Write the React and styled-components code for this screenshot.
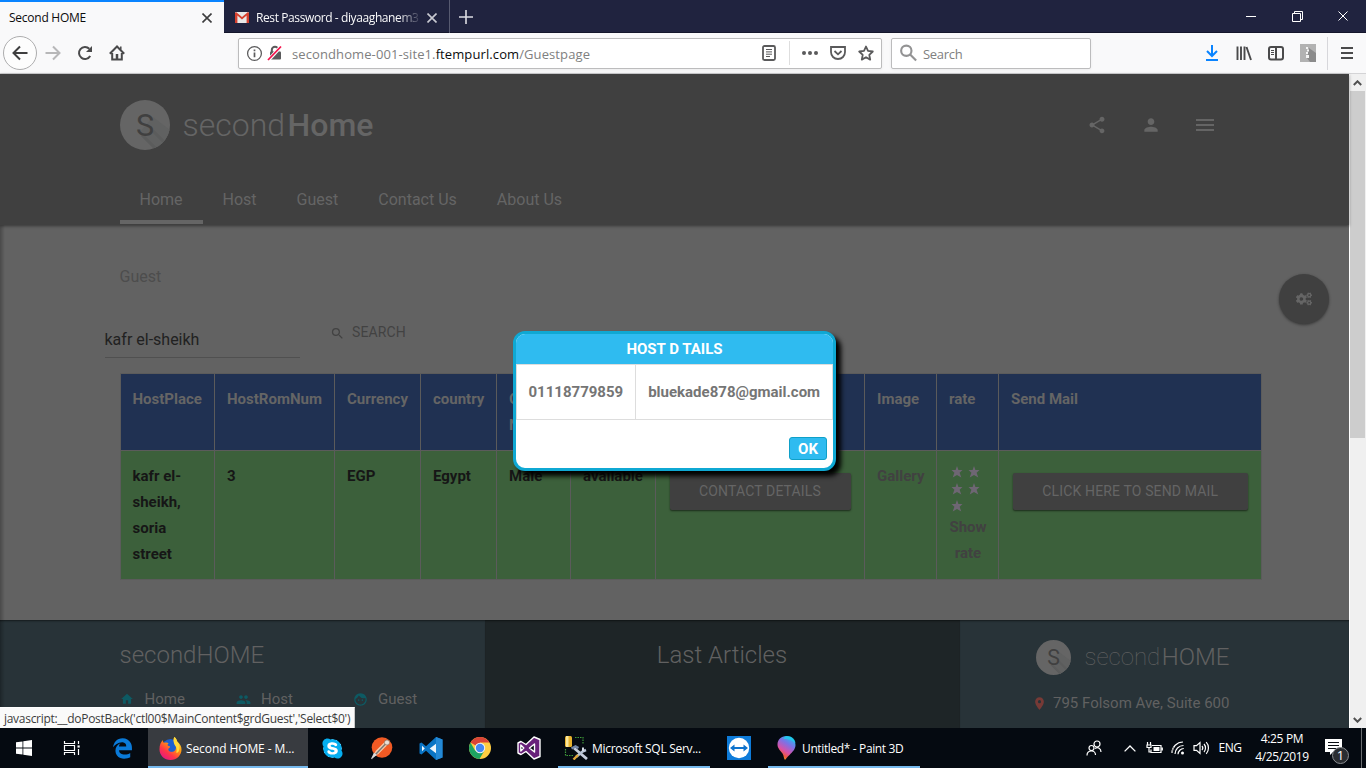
import React from "react";
import styled, { createGlobalStyle, css } from "styled-components";
import { MdShare, MdPerson, MdHome, MdPeople, MdFace, MdSearch, MdPlace } from "react-icons/md";
import { FaCogs, FaSkype, FaEdgeLegacy } from "react-icons/fa";

const ui = `"Open Sans", "Noto Sans", sans-serif`;

const GlobalStyle = createGlobalStyle`
  * { box-sizing: border-box; }
  body { margin: 0; overflow: hidden; background: #050a11; }
  svg { display: block; flex: none; }
`;

const Screen = styled.div`
  position: relative;
  width: 1366px;
  height: 768px;
  display: flex;
  flex-direction: column;
  font-family: Roboto, sans-serif;
`;

/* ---------- browser chrome ---------- */

const TabBar = styled.div`
  height: 33px;
  flex: none;
  display: flex;
  background: #20233f;
  box-shadow: inset 0 -1px 0 #14162b;
`;

const Tab = styled.div`
  display: flex;
  align-items: center;
  height: 33px;
  font: 12px ${ui};
  white-space: nowrap;
  ${(p) =>
    p.$active
      ? css`
          width: 224px;
          padding: 2px 12px 0 9px;
          background: #f9f9fa;
          color: #0c0c0d;
          box-shadow: inset 0 2px 0 #0a84ff;
        `
      : css`
          width: 226px;
          padding: 2px 12px 0 11px;
          color: #f9f9fa;
          border-right: 1px solid #575a70;
          gap: 7px;
        `}
`;

const TabTitle = styled.span`
  flex: 1;
  min-width: 0;
  letter-spacing: ${(p) => p.$ls || 0}px;
  ${(p) => p.$fade && "mask-image: linear-gradient(90deg, #000 87%, transparent 101%);"}
`;

const NewTab = styled.div`
  width: 32px;
  display: flex;
  align-items: center;
  justify-content: center;
`;

const WindowButtons = styled.div`
  margin-left: auto;
  display: flex;
`;

const WindowButton = styled.div`
  width: 46px;
  height: 32px;
  display: flex;
  align-items: center;
  justify-content: center;
`;

const Toolbar = styled.div`
  height: 41px;
  flex: none;
  display: flex;
  align-items: center;
  background: #f9f9fa;
  border-bottom: 1px solid #d4d4d6;
  padding: 0 3px;
`;

const BackButton = styled.div`
  width: 34px;
  height: 34px;
  border: 1px solid #adadae;
  border-radius: 50%;
  background: #fdfdfd;
  display: flex;
  align-items: center;
  justify-content: center;
`;

const ToolSlot = styled.div`
  width: 32px;
  display: flex;
  justify-content: center;
`;

const Field = styled.div`
  height: 31px;
  width: ${(p) => p.$w}px;
  margin-left: ${(p) => p.$ml}px;
  padding: 0 7px;
  border: 1px solid #bcbcbd;
  border-radius: 2px;
  background: #fff;
  box-shadow: 0 1px 3px rgba(0, 0, 0, 0.06);
  display: flex;
  align-items: center;
  font: 13px ${ui};
  color: #808080;
  white-space: nowrap;
`;

const FieldText = styled.span`
  margin-left: ${(p) => p.$ml}px;
  padding-top: 2px;
  letter-spacing: ${(p) => p.$ls}px;
  flex: 1;
  b {
    font-weight: 400;
    color: #0c0c0d;
  }
`;

const FieldDivider = styled.i`
  width: 1px;
  height: 24px;
  margin: 0 12px;
  background: #dedede;
`;

const FieldIcons = styled.div`
  display: flex;
  align-items: center;
  gap: 12px;
`;

const ToolsRight = styled.div`
  margin-left: auto;
  display: flex;
  align-items: center;
`;

const ToolDivider = styled.i`
  width: 1px;
  height: 33px;
  margin: 0 3px 0 3px;
  background: #d7d7db;
`;

/* ---------- page ---------- */

const Viewport = styled.div`
  position: relative;
  flex: 1;
  min-height: 0;
  display: flex;
`;

const Page = styled.div`
  position: relative;
  width: 1349px;
  display: flex;
  flex-direction: column;
  background: #626262;
  &::after {
    content: "";
    position: absolute;
    inset: 0 auto 0 0;
    width: 5px;
    background: linear-gradient(90deg, rgba(0, 0, 0, 0.25), transparent);
  }
`;

const Header = styled.header`
  height: 151px;
  flex: none;
  padding: 26px 135px 1px 119.5px;
  display: flex;
  flex-direction: column;
  justify-content: space-between;
  background: #404040;
  box-shadow: 0 1px 3px rgba(0, 0, 0, 0.45);
  z-index: 1;
  color: #656565;
`;

const HeaderTop = styled.div`
  height: 50px;
  display: flex;
  justify-content: space-between;
  align-items: center;
`;

const Brand = styled.div`
  display: flex;
  align-items: center;
  gap: ${(p) => p.$gap}px;
`;

const BrandName = styled.div`
  display: flex;
  gap: ${(p) => p.$gap}px;
  font-size: ${(p) => p.$size}px;
  font-weight: ${(p) => p.$w1};
  line-height: 1.2;
  b {
    font-weight: ${(p) => p.$w2};
  }
`;

const HeaderIcons = styled.div`
  display: flex;
  align-items: center;
  gap: 34px;
  svg:last-child {
    margin: -1px 0 0 1px;
  }
`;

const Nav = styled.nav`
  display: flex;
`;

const NavItem = styled.a`
  height: 44px;
  padding: 0 20px 2px;
  font-size: 16px;
  display: flex;
  align-items: center;
  border-bottom: 4px solid ${(p) => (p.$active ? "#656565" : "transparent")};
`;

const Main = styled.main`
  flex: 1;
  padding: 40px 0 0 119.5px;
`;

const Crumb = styled.div`
  font-size: 16px;
  line-height: 24px;
  color: #4d4d4d;
`;

const SearchForm = styled.div`
  display: flex;
  align-items: flex-start;
  margin: 33px 0 15px -15px;
  height: 36px;
`;

const PlaceInput = styled.div`
  width: 195.5px;
  height: 36px;
  padding-top: 6px;
  font-size: 16px;
  line-height: 24px;
  color: #212121;
  border-bottom: 1px solid #505050;
`;

const SearchLink = styled.div`
  margin-left: 30px;
  display: flex;
  align-items: center;
  gap: 7px;
  font-size: 14px;
  line-height: 20px;
  letter-spacing: 0.1px;
  color: #424242;
  svg {
    margin-top: 2px;
  }
`;

const Grid = styled.div`
  width: 1142px;
  margin-left: 0.5px;
  border-left: 1px solid #5b5b5b;
  border-top: 1px solid #5b5b5b;
  display: grid;
  grid-template-columns: 94px 120px 86px 76px 74px 85px 209px 72px 62px 263px;
  grid-template-rows: 77px 129px;
`;

const Cell = styled.div`
  padding: 12px 11px 12px 12px;
  border-right: 1px solid #5b5b5b;
  border-bottom: 1px solid #5b5b5b;
  font-size: 15px;
  font-weight: 700;
  line-height: 26px;
  background: ${(p) => (p.$head ? "#203152" : "#3c603b")};
  color: ${(p) => (p.$head ? "#656565" : p.$link ? "#414141" : "#161616")};
  text-align: ${(p) => (p.$center ? "center" : "left")};
  &:nth-child(10n + 1) {
    padding-left: 11.5px;
  }
`;

const NarrowHead = styled.span`
  display: block;
  width: 12px;
`;

const Stars = styled.div`
  width: 34px;
  display: flex;
  flex-wrap: wrap;
`;

const StarSlot = styled.span`
  width: 17px;
  height: 17px;
  padding: 3px 0 0 2px;
`;

const RaisedButton = styled.div`
  width: ${(p) => p.$w}px;
  height: 37px;
  margin: 10px 0 0 1.5px;
  border-radius: 2px;
  background: #404040;
  color: #656565;
  font-size: 14px;
  font-weight: 400;
  letter-spacing: 0.14px;
  line-height: 36px;
  text-align: center;
  white-space: nowrap;
  box-shadow: 0 1px 2px rgba(0, 0, 0, 0.55);
`;

const Footer = styled.footer`
  height: 108px;
  flex: none;
  display: grid;
  grid-template-columns: 485px 475px 1fr;
  color: #616161;
`;

const FooterPane = styled.section`
  background: ${(p) => (p.$dark ? "#1e2527" : "#283338")};
  padding: ${(p) => p.$pad};
  box-shadow: inset 0 2px 2px -1px rgba(0, 0, 0, 0.5);
  text-align: ${(p) => (p.$dark ? "center" : "left")};
`;

const FooterTitle = styled.div`
  font-size: 24px;
  font-weight: 300;
  line-height: 30px;
`;

const FooterLinks = styled.div`
  margin-top: ${(p) => p.$mt}px;
  margin-left: ${(p) => p.$ml || 0}px;
  display: flex;
`;

const FooterLink = styled.div`
  width: ${(p) => p.$w}px;
  display: flex;
  align-items: center;
  gap: ${(p) => p.$gap}px;
  font-size: 15px;
  line-height: 24px;
  white-space: nowrap;
`;

const Fab = styled.div`
  position: absolute;
  right: 20px;
  top: 200px;
  width: 50px;
  height: 50px;
  border-radius: 50%;
  background: #404040;
  color: #656565;
  box-shadow: 0 1px 3px rgba(0, 0, 0, 0.45);
  display: flex;
  align-items: center;
  justify-content: center;
`;

const Scrollbar = styled.div`
  width: 17px;
  padding: 0 1px 0 0;
  border-left: 1px solid #fff;
  background: #f0f0f0;
  display: flex;
  flex-direction: column;
  align-items: center;
`;

const ScrollArrow = styled.div`
  height: 17px;
  display: flex;
  align-items: center;
`;

const ScrollThumb = styled.div`
  width: 15px;
  height: 347px;
  margin-bottom: auto;
  background: #cdcdcd;
`;

/* ---------- dialog ---------- */

const Dialog = styled.div`
  position: absolute;
  left: 513px;
  top: 257px;
  width: 323px;
  height: 140px;
  border: 3px solid #0fa8d3;
  border-radius: 12px;
  background: #fff;
  box-shadow: 5px 5px 5px #000;
  overflow: hidden;
  z-index: 2;
  font-size: 15px;
  font-weight: 700;
`;

const DialogTitle = styled.div`
  height: 30px;
  line-height: 30px;
  text-align: center;
  color: #fff;
  background: #2fbbf0;
`;

const DialogRow = styled.div`
  height: 56px;
  display: flex;
  border: 1px solid #ddd;
  color: #757575;
  line-height: 54px;
`;

const DialogCell = styled.div`
  padding: 0 11.5px;
  & + & {
    border-left: 1px solid #ddd;
    padding-left: 12.5px;
  }
`;

const OkButton = styled.div`
  width: 38px;
  height: 23px;
  margin: 17px 6px 0 auto;
  border: 1px solid #0fa0c8;
  border-radius: 3px;
  background: #2fbbf0;
  color: #fff;
  line-height: 22px;
  text-align: center;
`;

const StatusTip = styled.div`
  position: absolute;
  left: 0;
  bottom: 0;
  width: 355px;
  height: 21px;
  padding-left: 4px;
  background: #fafafa;
  border-top: 1px solid #fff;
  border-right: 1px solid #c8c8c8;
  color: #3c3c3c;
  font: 12px/21px ${ui};
  letter-spacing: -0.29px;
  white-space: nowrap;
  z-index: 3;
`;

/* ---------- taskbar ---------- */

const Taskbar = styled.div`
  height: 40px;
  flex: none;
  display: flex;
  background: #050a11;
  color: #fff;
  font: 12px ${ui};
`;

const TaskSlot = styled.div`
  width: ${(p) => p.$w}px;
  display: flex;
  align-items: center;
  justify-content: center;
`;

const TaskButton = styled.div`
  width: ${(p) => p.$w}px;
  margin-left: ${(p) => p.$ml || 0}px;
  padding-left: ${(p) => p.$pl}px;
  display: flex;
  align-items: center;
  gap: ${(p) => p.$gap}px;
  white-space: nowrap;
  letter-spacing: ${(p) => p.$ls}px;
  background: ${(p) => (p.$active ? "#383b40" : "transparent")};
  box-shadow: inset 0 -2px 0 #76b9ed;
`;

const Tray = styled.div`
  margin-left: auto;
  display: flex;
  align-items: center;
`;

const TrayText = styled.div`
  width: ${(p) => p.$w}px;
  text-align: center;
  line-height: 18px;
  letter-spacing: ${(p) => p.$ls}px;
  white-space: nowrap;
`;

const Notifications = styled.div`
  position: relative;
  width: 42px;
  height: 40px;
  margin-left: 5px;
  padding: 11px 0 0 6px;
`;

const Badge = styled.span`
  position: absolute;
  left: 13px;
  top: 19px;
  width: 17px;
  height: 17px;
  border: 1px solid #8b8e92;
  border-radius: 50%;
  background: #2a2d31;
  font-size: 13px;
  line-height: 14px;
  text-align: center;
`;

const DesktopEdge = styled.i`
  width: 5px;
  height: 40px;
  border-left: 1px solid #6a6d70;
`;

/* ---------- drawings ---------- */

const Icon = ({ size = 16, w, h, box = "0 0 16 16", color = "#4a4a4b", sw = 2, children }) => (
  <svg width={w || size} height={h || size} viewBox={box} fill="none" stroke={color} strokeWidth={sw}>
    {children}
  </svg>
);

const Cross = ({ color, size = 10, sw = 1.6 }) => (
  <Icon size={size} box="0 0 10 10" color={color} sw={sw}>
    <path d="M.5.5l9 9M9.5.5l-9 9" />
  </Icon>
);

const Star = () => (
  <svg width="12" height="12" viewBox="0 0 12 12">
    <path d="M6 0l1.400 4H11.500L8.600 6.700 10.300 11.600 6 9 1.700 11.600 3.400 6.700.5 4h4.100z" fill="#6e6673" />
  </svg>
);

const GmailIcon = () => (
  <svg width="14" height="11" viewBox="0 0 14 11">
    <rect width="14" height="11" rx="1" fill="#e8e8e8" />
    <path d="M0 1v10h2.400V3.600L7 7.400l4.600-3.800V11H14V1L13 0 7 5 1 0z" fill="#d5402f" />
  </svg>
);

const RoundLogo = ({ size }) => (
  <svg width={size} height={size} viewBox="0 0 50 50">
    <defs>
      <clipPath id={"disc" + size}>
        <circle cx="25" cy="25" r="25" />
      </clipPath>
    </defs>
    <circle cx="25" cy="25" r="25" fill="#656565" />
    <g clipPath={`url(#disc${size})`}>
      <path d="M19 33l22 22 18-18-26-20z" fill="#606161" />
      <path d="M22 35l20 20M33 31l20 20" stroke="#5b5c5c" strokeWidth="3" />
    </g>
    <text x="25" y="36" textAnchor="middle" fontFamily="Roboto" fontSize="30.500" fill="#404040">
      S
    </text>
  </svg>
);

const TwoBars = () => (
  <svg width="18" height="12" viewBox="0 0 18 12" fill="#656565">
    <path d="M0 0h18v2H0zM0 5h18v2H0zM0 10h18v2H0z" />
  </svg>
);

const WindowsIcon = () => (
  <svg width="16" height="16" viewBox="0 0 16 16" fill="#fff">
    <path d="M0 2.300L6.500 1.400v6.200H0zM7.300 1.300L16 0v7.600H7.300zM0 8.400h6.500v6.200L0 13.700zM7.300 8.400H16V16l-8.700-1.300z" />
  </svg>
);

const TaskViewIcon = () => (
  <Icon size={18} box="0 0 18 18" color="#fff" sw={1.2}>
    <path d="M1.500 2v2.500h10V2M1.500 16v-2.500h10V16M1.500 6.500h10v5h-10zM15.500 2v3M15.500 10v6" />
    <path d="M14.500 7.500h2.200" strokeWidth="2.200" />
  </Icon>
);

const FirefoxIcon = () => (
  <svg width="23" height="23" viewBox="0 0 24 24">
    <defs>
      <linearGradient id="fx" x1=".9" y1="0" x2=".2" y2="1">
        <stop offset="0" stopColor="#fff44f" />
        <stop offset=".4" stopColor="#ff980e" />
        <stop offset=".7" stopColor="#ff3647" />
        <stop offset="1" stopColor="#e31587" />
      </linearGradient>
    </defs>
    <circle cx="12" cy="11" r="9" fill="#1a5fd0" />
    <path d="M16 0c2 1.500 2.600 3 2.800 4.500C22 7 23.500 10 23.500 13 23.500 19 18.500 24 12 24S.5 19 .5 13C.5 8 2 5 4 3c0 1.500.5 2.400 1.300 3C7 5.500 9 5.500 10 6.500 8.500 8 8.500 9 10.500 9.500c1.500.4 1.500 1.500-.5 2.500-1 2 1 3.800 3.500 3.500 4-.5 5-4 3.700-7C15.500 5.500 14.500 3 16 0z" fill="url(#fx)" />
    <path d="M16 0c2 1.500 2.600 3 2.800 4.500 2.700 3 3.400 7 1.700 10.500-1 1.500-2.500 2-2.500 1 1.500-4-.5-6-2-8.500C14.800 4.500 15 2 16 0z" fill="#ffd93a" />
  </svg>
);

const SkypeBadge = styled.div`
  display: flex;
  background: radial-gradient(circle, #fff 55%, transparent 56%);
`;

const PostmanIcon = () => (
  <svg width="23" height="23" viewBox="0 0 23 23">
    <circle cx="12" cy="10.500" r="10.300" fill="#f15a24" />
    <path d="M17 5.500L7 15.500" stroke="#f4c9a8" strokeWidth="4" strokeLinecap="round" />
    <path d="M15.500 7L6 17l-4.500 5" stroke="#777" strokeWidth="1.400" fill="none" />
    <circle cx="17" cy="5.500" r="2.600" fill="#e8e0d8" stroke="#8a6a55" strokeWidth=".7" />
    <path d="M1 22l3-6.500 3 2.500z" fill="#ddd" />
  </svg>
);

const VsCodeIcon = () => (
  <svg width="24" height="23" viewBox="0 0 24 23">
    <path d="M17 0l6.500 2.500v18L17 23 7 13.800 2.500 17.500.5 16.500v-10l2-1L7 9.200z" fill="#0a74c4" />
    <path d="M17 6.800v9.400l-6.300-4.700zM3 8.700v5.600l2.800-2.800z" fill="#eef6fc" />
    <path d="M17 0l6.500 2.500v18L17 23z" fill="#2489d6" />
  </svg>
);

const ChromeIcon = () => (
  <svg width="22" height="22" viewBox="0 0 22 22">
    <circle cx="11" cy="11" r="11" fill="#ffcd42" />
    <path d="M11 11L1.500 5.500A11 11 0 0 1 20.500 5.500H11z" fill="#db4437" />
    <path d="M1.500 5.500A11 11 0 0 0 10.500 22l5-8.500L11 11 6.200 13.700z" fill="#1da362" />
    <circle cx="11" cy="11" r="5.200" fill="#f3f3f3" />
    <circle cx="11" cy="11" r="4.200" fill="#4587f3" />
  </svg>
);

const VisualStudioIcon = () => (
  <svg width="24" height="24" viewBox="0 0 24 24" strokeLinejoin="round">
    <path fillRule="evenodd" d="M17 1l6 2.500v17L17 23l-8-7.500L4 18.500 1 17V7l3-1.500L9 8.500zM17.500 8l-5 4 5 4zM3.800 9v6l3-3z" fill="#68217a" stroke="#fff" strokeWidth="1.400" />
  </svg>
);

const SqlIcon = () => (
  <svg width="24" height="24" viewBox="0 0 24 24">
    <rect x="1" y="0" width="7" height="11" rx="1.500" fill="#e9b32e" />
    <rect x="2" y="0" width="2.500" height="11" fill="#fbe79b" />
    <path d="M11 1.500h8V8M1.500 13v6.500H9" stroke="#3f9a3a" strokeWidth="1.200" strokeDasharray="1.500 1" fill="none" />
    <path d="M10 12l13 11" stroke="#c6cede" strokeWidth="2.800" />
    <path d="M7.500 12.500l4-2 3 1.500" stroke="#7488a8" strokeWidth="2.500" fill="none" />
    <path d="M22 14l-3.500 1.500L12 21" stroke="#b9c4d6" strokeWidth="2.500" fill="none" />
    <path d="M19 11.500v3.500" stroke="#d7dde8" strokeWidth="2" />
    <path d="M14 19l-4.500 4.500" stroke="#e0a63a" strokeWidth="2.400" />
  </svg>
);

const TeamViewerIcon = () => (
  <svg width="24" height="24" viewBox="0 0 24 24">
    <rect width="24" height="24" fill="#0e7bd9" />
    <circle cx="12" cy="12" r="10.200" fill="#fff" />
    <path d="M3 12l4.500-3.500v2.500h9V8.500L21 12l-4.500 3.500V13h-9v2.500z" fill="#0e72cc" />
  </svg>
);

const Paint3dIcon = () => (
  <svg width="19" height="24" viewBox="0 0 19 24">
    <defs>
      <linearGradient id="p3" x1=".8" y1="0" x2=".3" y2="1">
        <stop offset="0" stopColor="#18c5f0" />
        <stop offset=".35" stopColor="#7c72e6" />
        <stop offset=".65" stopColor="#d851a8" />
        <stop offset=".85" stopColor="#f05a35" />
        <stop offset="1" stopColor="#ffc52a" />
      </linearGradient>
    </defs>
    <path d="M9.500 0C15 0 18.500 4 18.500 9c0 4-3 7-6 10-2 2-3 3-4.500 5-1.500-2-1-4-2.500-6.500C3.500 14.500.5 12.500.5 8.500.5 4 4 0 9.500 0z" fill="url(#p3)" />
    <path d="M10 0c5 0 8 3 8.500 7-3-2-6-4-12-4 .5-2 2-3 3.500-3z" fill="#19d3ee" opacity=".7" />
  </svg>
);

/* ---------- data ---------- */

const navItems = ["Home", "Host", "Guest", "Contact Us", "About Us"];
const columns = ["HostPlace", "HostRomNum", "Currency", "country", "G N", "", "", "Image", "rate", "Send Mail"];

export default function App() {
  return (
    <Screen>
      <GlobalStyle />
      <TabBar>
        <Tab $active>
          <TabTitle $ls={-0.25}>Second HOME</TabTitle>
          <Cross color="#3d3d3e" />
        </Tab>
        <Tab>
          <GmailIcon />
          <TabTitle $ls={-0.4} $fade>Rest Password - diyaaghanem3</TabTitle>
          <Cross color="#c9cad2" />
        </Tab>
        <NewTab>
          <Icon size={14} box="0 0 14 14" color="#dcdde3" sw={1.6}>
            <path d="M7 0v14M0 7h14" />
          </Icon>
        </NewTab>
        <WindowButtons>
          <WindowButton>
            <Icon size={10} box="0 0 10 10" color="#fff" sw={1}><path d="M0 5.500h10" /></Icon>
          </WindowButton>
          <WindowButton>
            <Icon size={11} box="0 0 11 11" color="#fff" sw={1}>
              <path d="M.5 2.500h8v8h-8zM2.500 2.500v-2h8v8h-2" />
            </Icon>
          </WindowButton>
          <WindowButton><Cross color="#fff" sw={1} /></WindowButton>
        </WindowButtons>
      </TabBar>

      <Toolbar>
        <BackButton>
          <Icon color="#3e3e3f"><path d="M15.500 8H1.500M8 1.500L1.500 8 8 14.500" /></Icon>
        </BackButton>
        <ToolSlot>
          <Icon color="#b7b7b8"><path d="M.5 8h14M8 1.500L14.500 8 8 14.500" /></Icon>
        </ToolSlot>
        <ToolSlot>
          <Icon>
            <path d="M13.200 11A6 6 0 1 1 12.300 3.800" />
            <path d="M15 1v6H9z" fill="#4a4a4b" stroke="none" />
          </Icon>
        </ToolSlot>
        <ToolSlot>
          <Icon>
            <path d="M.8 8.700L8 1.500l7.200 7.200M3.200 8v6.500h9.600V8" />
            <path d="M8 9v5" strokeWidth="2.500" />
            <path d="M11.800 1.500v3" strokeWidth="1.500" />
          </Icon>
        </ToolSlot>

        <Field $w={644} $ml={105}>
          <Icon size={17} color="#5c5c5d" sw={1.200}>
            <circle cx="8" cy="8" r="6.500" />
            <path d="M8 7v4.500M8 4.300v1.600" strokeWidth="1.600" />
          </Icon>
          <svg width="20" height="16" viewBox="-4 0 20 16">
            <path d="M4.800 7V5a3.200 3.200 0 0 1 6.400 0v2" fill="none" stroke="#5a5a5b" strokeWidth="2" />
            <rect x="3" y="6.500" width="11" height="8" rx="1" fill="#5a5a5b" />
            <path d="M1.500 15L14 1.500" stroke="#fff" strokeWidth="3.500" />
            <path d="M1 15L14 1.500" stroke="#f5124b" strokeWidth="1.800" />
          </svg>
          <FieldText $ml={9} $ls={0.1}>secondhome-001-site1.<b>ftempurl.com</b>/Guestpage</FieldText>
          <Icon color="#5a5a5b" sw={1.800}>
            <rect x="2" y="1" width="12" height="14" rx="1.500" />
            <path d="M5 4.500h6M5 6.900h6M5 9.200h6M5 11.500h4" strokeWidth="1" />
          </Icon>
          <FieldDivider />
          <FieldIcons>
            <svg width="16" height="16" viewBox="0 0 16 16" fill="#5a5a5b">
              <circle cx="2" cy="8" r="2" /><circle cx="8" cy="8" r="2" /><circle cx="14" cy="8" r="2" />
            </svg>
            <Icon color="#5a5a5b" sw={1.800}>
              <path d="M1 2h14v5c0 4-3 7-7 7s-7-3-7-7zM4.500 6L8 9.300 11.500 6" />
            </Icon>
            <Icon color="#5a5a5b" sw={1.800}>
              <path d="M8 1.500l2 4.400 4.800.6-3.500 3.300.9 4.800L8 12.200l-4.200 2.400.9-4.800L1.200 6.500 6 5.900z" strokeLinejoin="round" />
            </Icon>
          </FieldIcons>
        </Field>
        <Field $w={200} $ml={9}>
          <Icon size={18} color="#939394" sw={1.900}>
            <circle cx="6.500" cy="6" r="4.600" />
            <path d="M9.700 9.200l5.500 5.500" />
          </Icon>
          <FieldText $ml={6} $ls={-0.3}>Search</FieldText>
        </Field>

        <ToolsRight>
          <ToolSlot>
            <Icon size={16} color="#0a84ff"><path d="M8 0v10.500M3 6l5 5 5-5M2 15h12" /></Icon>
          </ToolSlot>
          <ToolSlot>
            <Icon sw={1.900}><path d="M1.500 1.500v13.500M5 1.500v13.500M8.500 1.500v13.500M10.500 2l4.500 13" /></Icon>
          </ToolSlot>
          <ToolSlot>
            <Icon>
              <rect x="1" y="2" width="14" height="12.500" rx="2" />
              <path d="M8 2v12.500" /><path d="M3 5.500h3M3 7.500h3M3 9.500h3" strokeWidth="1" />
            </Icon>
          </ToolSlot>
          <ToolSlot>
            <svg width="16" height="18" viewBox="0 0 16 18">
              <rect width="16" height="18" fill="#b2b2b2" />
              <path d="M9 4l7 5v9h-6L7 14z" fill="#8b8b8b" />
              <path d="M6 3h2v2H6zM7 5.500h2v2H7zM6 8h2v2H6zM6 11h3v3H6z" fill="#f4f4f4" />
            </svg>
          </ToolSlot>
          <ToolDivider />
          <ToolSlot>
            <Icon size={14} box="0 0 14 14"><path d="M1 2h12M1 7h12M1 12h12" /></Icon>
          </ToolSlot>
        </ToolsRight>
      </Toolbar>

      <Viewport>
        <Page>
          <Header>
            <HeaderTop>
              <Brand $gap={13}>
                <RoundLogo size={50} />
                <BrandName $size={32} $w1={300} $w2={500} $gap={2.5}>
                  second<b>Home</b>
                </BrandName>
              </Brand>
              <HeaderIcons>
                <MdShare size={20} />
                <MdPerson size={20} />
                <TwoBars />
              </HeaderIcons>
            </HeaderTop>
            <Nav>
              {navItems.map((item, i) => (
                <NavItem key={item} $active={i === 0}>{item}</NavItem>
              ))}
            </Nav>
          </Header>

          <Main>
            <Crumb>Guest</Crumb>
            <SearchForm>
              <PlaceInput>kafr el-sheikh</PlaceInput>
              <SearchLink>
                <MdSearch size={15} />
                SEARCH
              </SearchLink>
            </SearchForm>
            <Grid>
              {columns.map((name, i) => (
                <Cell key={i} $head>{i === 4 ? <NarrowHead>{name}</NarrowHead> : name}</Cell>
              ))}
              <Cell>kafr el-sheikh, soria street</Cell>
              <Cell>3</Cell>
              <Cell>EGP</Cell>
              <Cell>Egypt</Cell>
              <Cell>Male</Cell>
              <Cell>available</Cell>
              <Cell><RaisedButton $w={181}>CONTACT DETAILS</RaisedButton></Cell>
              <Cell $link>Gallery</Cell>
              <Cell $link $center>
                <Stars>
                  {[1, 2, 3, 4, 5].map((n) => (
                    <StarSlot key={n}><Star /></StarSlot>
                  ))}
                </Stars>
                Show rate
              </Cell>
              <Cell><RaisedButton $w={235.5}>CLICK HERE TO SEND MAIL</RaisedButton></Cell>
            </Grid>
          </Main>

          <Footer>
            <FooterPane $pad="20px 0 0 119.5px">
              <FooterTitle>secondHOME</FooterTitle>
              <FooterLinks $mt={17}>
                <FooterLink $w={116.5} $gap={11}><MdHome size={14} color="#0d5a63" />Home</FooterLink>
                <FooterLink $w={117} $gap={10}><MdPeople size={15} color="#0d5a63" />Host</FooterLink>
                <FooterLink $w={90} $gap={10}><MdFace size={15} color="#0d5a63" />Guest</FooterLink>
              </FooterLinks>
            </FooterPane>
            <FooterPane $dark $pad="20px 1px 0 0">
              <FooterTitle>Last Articles</FooterTitle>
            </FooterPane>
            <FooterPane $pad="20px 0 0 76px">
              <Brand $gap={13.5}>
                <RoundLogo size={35} />
                <BrandName $size={24} $w1={100} $w2={300} $gap={1.5}>
                  second<b>HOME</b>
                </BrandName>
              </Brand>
              <FooterLinks $mt={16} $ml={-4}>
                <FooterLink $w={200} $gap={6}><MdPlace size={15} color="#773a36" />795 Folsom Ave, Suite 600</FooterLink>
              </FooterLinks>
            </FooterPane>
          </Footer>
          <Fab><FaCogs size={16} /></Fab>
        </Page>

        <Scrollbar>
          <ScrollArrow>
            <Icon w={9} h={6} box="0 0 9 6" color="#505050" sw={2}><path d="M.8 5L4.500 1.300 8.200 5" /></Icon>
          </ScrollArrow>
          <ScrollThumb />
          <ScrollArrow>
            <Icon w={9} h={6} box="0 0 9 6" color="#505050" sw={2}><path d="M.8 1L4.500 4.700 8.200 1" /></Icon>
          </ScrollArrow>
        </Scrollbar>

        <Dialog>
          <DialogTitle>HOST D TAILS</DialogTitle>
          <DialogRow>
            <DialogCell>01118779859</DialogCell>
            <DialogCell>bluekade878@gmail.com</DialogCell>
          </DialogRow>
          <OkButton>OK</OkButton>
        </Dialog>
        <StatusTip>javascript:__doPostBack('ctl00$MainContent$grdGuest','Select$0')</StatusTip>
      </Viewport>

      <Taskbar>
        <TaskSlot $w={48}><WindowsIcon /></TaskSlot>
        <TaskSlot $w={48}><TaskViewIcon /></TaskSlot>
        <TaskSlot $w={52}><FaEdgeLegacy size={21} color="#0a7ad9" /></TaskSlot>
        <TaskButton $active $w={160} $pl={11} $gap={4} $ls={-0.1}><FirefoxIcon />Second HOME - M...</TaskButton>
        <TaskSlot $w={49}><SkypeBadge><FaSkype size={23} color="#05aef0" /></SkypeBadge></TaskSlot>
        <TaskSlot $w={49}><PostmanIcon /></TaskSlot>
        <TaskSlot $w={49}><VsCodeIcon /></TaskSlot>
        <TaskSlot $w={49}><ChromeIcon /></TaskSlot>
        <TaskSlot $w={50}><VisualStudioIcon /></TaskSlot>
        <TaskButton $w={152} $ml={4} $pl={6} $gap={4} $ls={-0.3}><SqlIcon />Microsoft SQL Serv...</TaskButton>
        <TaskSlot $w={58}><TeamViewerIcon /></TaskSlot>
        <TaskButton $w={152} $pl={9} $gap={6} $ls={-0.37}><Paint3dIcon />Untitled* - Paint 3D</TaskButton>
        <Tray>
          <TaskSlot $w={44}>
            <Icon color="#fff" sw={1.200}>
              <circle cx="11" cy="4" r="3" /><circle cx="5.500" cy="8" r="2.500" />
              <path d="M1 15.500c0-3 2-4.500 4.500-4.500s4 2 4 4M9 8.500c3-2 6 0 6 3.500" />
            </Icon>
          </TaskSlot>
          <TaskSlot $w={28}>
            <Icon w={12} h={7} box="0 0 12 7" color="#fff" sw={1.300}><path d="M.6 6.400L6 1l5.400 5.400" /></Icon>
          </TaskSlot>
          <TaskSlot $w={20}>
            <Icon w={17} h={14} box="0 0 17 14" color="#fff" sw={1.200}>
              <path d="M6 4.500h9v7H5v-3M16.300 6.500v3M1.500 1v3M4.500 1v3M1 4h4v2.500H1zM3 6.500V11h2" />
              <path d="M7.500 6h6v4h-6z" fill="#fff" stroke="none" />
            </Icon>
          </TaskSlot>
          <TaskSlot $w={28}>
            <Icon w={14} h={14} box="0 0 14 14" color="#fff" sw={1.200}>
              <path d="M1 12A11 11 0 0 1 12 1M4 13A8.500 8.500 0 0 1 12.500 4.500M7 13.300A6 6 0 0 1 12.800 7.500" />
              <path d="M1 12A11 11 0 0 1 3 6" stroke="#999" />
              <circle cx="11.500" cy="12" r="1.500" fill="#fff" stroke="none" />
            </Icon>
          </TaskSlot>
          <TaskSlot $w={18}>
            <Icon w={17} h={14} box="0 0 17 14" color="#fff" sw={1.200}>
              <path d="M1 4.700h2.500L7 1.500v11L3.500 9.300H1zM9 5c1 1.200 1 2.800 0 4M11 3c2 2.200 2 5.800 0 8M13.200 1.200c3 3.200 3 8.400 0 11.600" />
            </Icon>
          </TaskSlot>
          <TrayText $w={40} $ls={-0.4}>ENG</TrayText>
          <TrayText $w={64} $ls={-0.35}>4:25 PM<br />4/25/2019</TrayText>
          <Notifications>
            <svg width="17" height="16" viewBox="0 0 17 16">
              <path d="M0 0h17v13H8l-3 3v-3H0z" fill="#fff" />
              <path d="M3 3.500h11M3 6.500h11M3 9.500h8" stroke="#0a0e14" />
            </svg>
            <Badge>1</Badge>
          </Notifications>
          <DesktopEdge />
        </Tray>
      </Taskbar>
    </Screen>
  );
}
